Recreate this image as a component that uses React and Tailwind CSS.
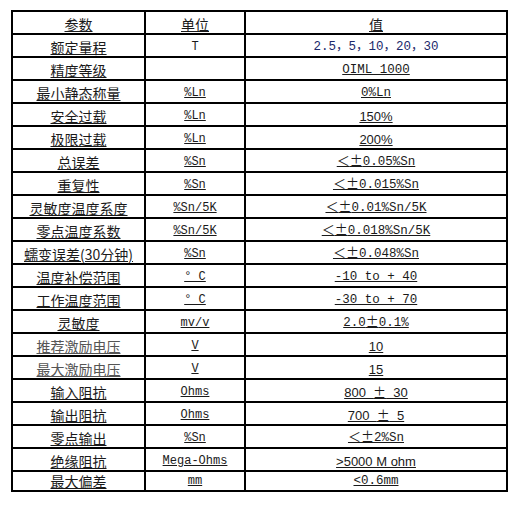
const cjk = "font-['Noto_Sans_CJK_SC',sans-serif]";
const mono = "font-['Liberation_Mono','Noto_Sans_CJK_SC',monospace]";
const sans = "font-['Liberation_Sans','Noto_Sans_CJK_SC',sans-serif]";

// [参数, 单位, 值, 值的字体]
const rows = [
  ["额定量程", "T", "2.5，5，10，20，30", "mono"],
  ["精度等级", "", "OIML 1000", "mono"],
  ["最小静态称量", "%Ln", "0%Ln", "mono"],
  ["安全过载", "%Ln", "150%", "sans"],
  ["极限过载", "%Ln", "200%", "sans"],
  ["总误差", "%Sn", "＜±0.05%Sn", "mono"],
  ["重复性", "%Sn", "＜±0.015%Sn", "mono"],
  ["灵敏度温度系度", "%Sn/5K", "＜±0.01%Sn/5K", "mono"],
  ["零点温度系数", "%Sn/5K", "＜±0.018%Sn/5K", "mono"],
  ["蠕变误差(30分钟)", "%Sn", "＜±0.048%Sn", "mono"],
  ["温度补偿范围", "° C", "-10 to + 40", "mono"],
  ["工作温度范围", "° C", "-30 to + 70", "mono"],
  ["灵敏度", "mv/v", "2.0±0.1%", "mono"],
  ["推荐激励电压", "V", "10", "sans"],
  ["最大激励电压", "V", "15", "sans"],
  ["输入阻抗", "Ohms", "800  ±  30", "sans"],
  ["输出阻抗", "Ohms", "700  ±  5", "sans"],
  ["零点输出", "%Sn", "＜±2%Sn", "mono"],
  ["绝缘阻抗", "Mega-Ohms", ">5000 M ohm", "sans"],
  ["最大偏差", "mm", "<0.6mm", "mono"],
];

// full-width symbols come from the CJK font, like the original sheet
function withWide(text) {
  return (
    <span className="whitespace-pre">
      {text.split(/([±＜])/).map((part, i) =>
        part === "±" || part === "＜" ? (
          <span key={i} className={`${cjk} text-[13px]`}>
            {part}
          </span>
        ) : (
          part
        )
      )}
    </span>
  );
}

function Cell({ children, last, className = "" }) {
  return (
    <div
      className={`${last ? "h-[20px]" : "h-[23px]"} border-r-2 border-b-2 border-black flex items-end justify-center pb-[1px] whitespace-nowrap text-[#1a1a1a] ${className}`}
    >
      {children}
    </div>
  );
}

export default function App() {
  return (
    <div className="w-[518px] h-[509px] bg-white pt-[10px] pl-[11px]">
      <div className="grid grid-cols-[133px_100px_262px] w-[497px] border-l-2 border-t-2 border-black">
        {/* Header */}
        <Cell className={`${cjk} text-[14px] leading-[16px] underline underline-offset-[1px]`}>参数</Cell>
        <Cell className={`${cjk} text-[14px] leading-[16px] underline underline-offset-[1px]`}>单位</Cell>
        <Cell className={`${cjk} text-[14px] leading-[16px] underline underline-offset-[1px]`}>值</Cell>

        {rows.map(([label, unit, value, font], i) => {
          const last = i === rows.length - 1;
          const faint = label.includes("激励电压");
          const plain = i === 0;
          return [
            <Cell
              key={`a${i}`}
              last={last}
              className={`${cjk} text-[14px] leading-[16px] underline underline-offset-[1px] ${faint ? "text-[#555]" : ""}`}
            >
              {label}
            </Cell>,
            <Cell
              key={`b${i}`}
              last={last}
              className={`${mono} text-[12px] leading-[15px] ${plain ? "" : "underline underline-offset-[1px]"}`}
            >
              {unit}
            </Cell>,
            <Cell
              key={`c${i}`}
              last={last}
              className={`${font === "sans" ? `${sans} text-[13px]` : `${mono} text-[12.5px]`} leading-[15px] ${plain ? "text-[#1c2a6b]" : "underline underline-offset-[1px]"}`}
            >
              {withWide(value)}
            </Cell>,
          ];
        })}
      </div>
    </div>
  );
}
